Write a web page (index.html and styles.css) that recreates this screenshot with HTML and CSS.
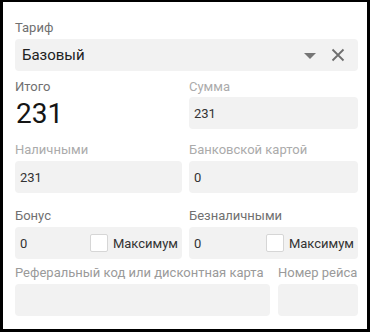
FILE: index.html
```html
<!DOCTYPE html>
<html>

<head>
    <meta charset="utf-8">
    <title>Оплата</title>
    <link rel="stylesheet" href="styles.css">
</head>

<body>
    <div id="payform">
        <div class="field row-tariff">
            <p class="lbl dark">Тариф</p>
            <div class="select">
                <span class="select-value">Базовый</span>
                <svg class="arrow" width="12" height="6" viewBox="0 0 12 6"><path d="M0 0h12L6 6z" fill="#767676"/></svg>
                <svg class="clear" width="14" height="14" viewBox="0 0 14 14"><path d="M1.5 1.5l11 11M12.5 1.5l-11 11" stroke="#6e6e6e" stroke-width="1.8" fill="none"/></svg>
            </div>
        </div>

        <div class="grid row-total">
            <div class="field">
                <p class="lbl dark">Итого</p>
                <p class="total">231</p>
            </div>
            <div class="field">
                <p class="lbl light">Сумма</p>
                <div class="input">231</div>
            </div>
        </div>

        <div class="grid row-pay">
            <div class="field">
                <p class="lbl light">Наличными</p>
                <div class="input">231</div>
            </div>
            <div class="field">
                <p class="lbl light">Банковской картой</p>
                <div class="input">0</div>
            </div>
        </div>

        <div class="grid row-bonus">
            <div class="field">
                <p class="lbl dark">Бонус</p>
                <div class="input withcheck">
                    <span class="val">0</span>
                    <span class="check"></span>
                    <span class="checklbl">Максимум</span>
                </div>
            </div>
            <div class="field">
                <p class="lbl dark">Безналичными</p>
                <div class="input withcheck">
                    <span class="val">0</span>
                    <span class="check"></span>
                    <span class="checklbl">Максимум</span>
                </div>
            </div>
        </div>

        <div class="grid2 row-ref">
            <div class="field">
                <p class="lbl mid">Реферальный код или дисконтная карта</p>
                <div class="input"></div>
            </div>
            <div class="field">
                <p class="lbl mid">Номер рейса</p>
                <div class="input"></div>
            </div>
        </div>
    </div>
</body>

</html>
```

FILE: styles.css
```css
* {
    box-sizing: border-box;
    margin: 0px;
    padding: 0px;
    font-family: Roboto, "Liberation Sans", sans-serif;
}

body {
    width: 370px;
    height: 332px;
    background: #000;
}

#payform {
    width: 370px;
    height: 332px;
    background: #fff;
    border: 3px solid #000;
    border-top-width: 2px;
    padding: 18px 9px 0px 12px;
    display: flex;
    flex-direction: column;
}

.field {
    display: flex;
    flex-direction: column;
}

.lbl {
    font-size: 13px;
    line-height: 15px;
    height: 15px;
    margin-bottom: 4px;
    white-space: nowrap;
}

.dark {
    color: #707070;
}

.light {
    color: #ababab;
}

.mid {
    color: #9a9a9a;
}

.grid {
    display: grid;
    grid-template-columns: 167px 169px;
    gap: 7px;
}

.grid2 {
    display: grid;
    grid-template-columns: 255px 80px;
    gap: 8px;
}

.row-total {
    margin-top: 8px;
}

.row-total .lbl {
    margin-bottom: 3px;
}

.row-pay {
    margin-top: 13px;
}

.row-bonus {
    margin-top: 15px;
}

.row-ref {
    margin-top: 6px;
}

.select {
    height: 32px;
    background: #f2f2f2;
    border-radius: 4px;
    display: flex;
    align-items: center;
    padding: 0px 13px 0px 7px;
}

.select-value {
    flex: 1;
    font-size: 15px;
    color: #212121;
}

.arrow {
    margin-right: 15px;
    margin-top: 1px;
}

.input {
    height: 32px;
    background: #f2f2f2;
    border-radius: 4px;
    display: flex;
    align-items: center;
    padding: 0px 4px 0px 5px;
    font-size: 13px;
    color: #333;
}

.total {
    font-size: 28px;
    line-height: 30px;
    height: 30px;
    color: #151515;
    margin-left: 1px;
    margin-top: 2px;
}

.val {
    flex: 1;
}

.check {
    width: 18px;
    height: 18px;
    background: #fff;
    border: 1px solid #d6d6d6;
    border-radius: 2px;
    margin-right: 5px;
}

.checklbl {
    color: #333;
    font-size: 13px;
}
```
